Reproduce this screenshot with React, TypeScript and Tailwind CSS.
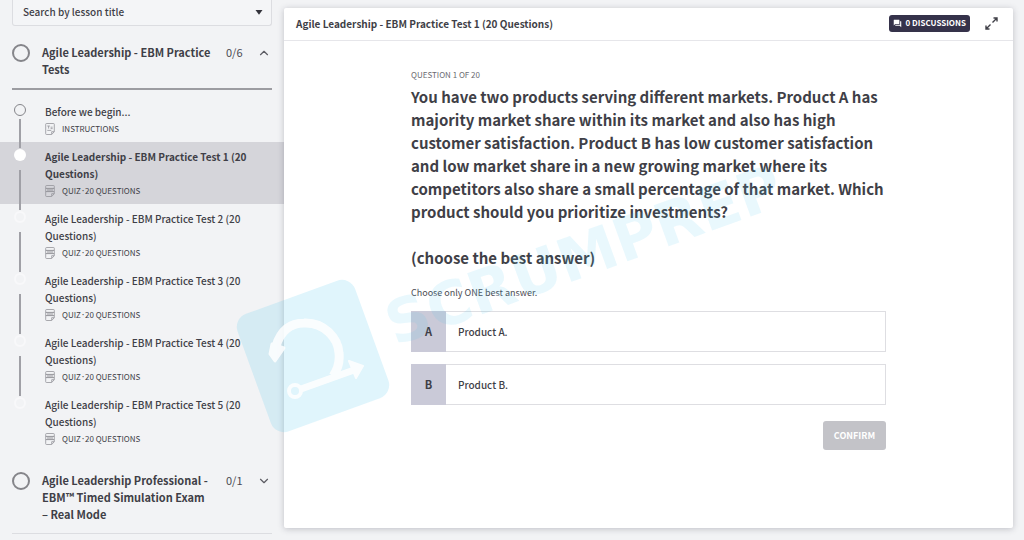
import type { ReactNode } from 'react';
import { ChevronDown, ChevronUp } from 'lucide-react';
import { MdForum } from 'react-icons/md';

type Lesson = {
  title: string;
  type: string;
  detail?: string;
  active?: boolean;
};

const lessons: Lesson[] = [
  { title: 'Before we begin...', type: 'INSTRUCTIONS' },
  { title: 'Agile Leadership - EBM Practice Test 1 (20 Questions)', type: 'QUIZ', detail: '20 QUESTIONS', active: true },
  { title: 'Agile Leadership - EBM Practice Test 2 (20 Questions)', type: 'QUIZ', detail: '20 QUESTIONS' },
  { title: 'Agile Leadership - EBM Practice Test 3 (20 Questions)', type: 'QUIZ', detail: '20 QUESTIONS' },
  { title: 'Agile Leadership - EBM Practice Test 4 (20 Questions)', type: 'QUIZ', detail: '20 QUESTIONS' },
  { title: 'Agile Leadership - EBM Practice Test 5 (20 Questions)', type: 'QUIZ', detail: '20 QUESTIONS' },
];

const options = [
  { key: 'A', label: 'Product A.' },
  { key: 'B', label: 'Product B.' },
];

function LessonIcon({ quiz }: { quiz: boolean }) {
  return (
    <svg width="10" height="12" viewBox="0 0 10 12" fill="none" stroke="#94949a" strokeWidth="0.8" className="mr-[7px] shrink-0" aria-hidden="true">
      <path d="M1.5 0.5h7a0.8 0.8 0 0 1 .8 .8v7.4l-2.6 2.8H1.5a.8 .8 0 0 1-.8-.8V1.3a.8 .8 0 0 1 .8-.8z" />
      <path d="M6.7 11.2V8.7h2.5" />
      {quiz ? (
        <path d="M0.8 3.4h8.4M0.8 6.6h8.4M2 5h6" strokeWidth="1" />
      ) : (
        <path d="M2.3 3h2.6M3.6 3v2.6M5.6 4.2h2M5.6 5.6h2M2.3 7.4h4" />
      )}
    </svg>
  );
}

function SectionHeader({ title, count, open }: { title: ReactNode; count: string; open: boolean }) {
  const Chevron = open ? ChevronUp : ChevronDown;
  return (
    <button type="button" aria-expanded={open} className="flex w-full items-start text-left">
      <span className="h-[18px] w-[18px] shrink-0 rounded-full border-2 border-[#85858a]" />
      <span className="ml-3 flex-1 text-[11px] leading-[17px] font-bold text-[#3f3f47]">{title}</span>
      <span className="ml-1 w-[31px] text-[11px] leading-[17px] text-[#4b4b53]">{count}</span>
      <Chevron className="mt-[2px] mr-px shrink-0 text-[#5c5c63]" size={14} strokeWidth={2} />
    </button>
  );
}

function LessonRow({ lesson, first, last }: { lesson: Lesson; first: boolean; last: boolean }) {
  return (
    <li className={lesson.active ? 'bg-[#d5d5da]' : ''}>
      <a href="#lesson" className="flex pr-7 pl-[14px]">
        <span className="-mb-[6px] flex w-3 shrink-0 flex-col items-center pt-[7px]">
          <span
            className={
              first
                ? 'h-3 w-3 shrink-0 rounded-full border-[1.5px] border-[#85858a]'
                : lesson.active
                  ? 'h-3 w-3 shrink-0 rounded-full bg-white'
                  : 'h-3 w-3 shrink-0 rounded-full border-2 border-[#f8f8fa]'
            }
          />
          {!last && <span className={first ? 'mt-[3px] w-[2px] flex-1 bg-[#a0a0a6]' : 'mt-[9px] w-[2px] flex-1 bg-[#a0a0a6]'} />}
        </span>
        <span className="ml-[19px] flex-1 pt-[6px] pb-[5px]">
          <span
            className={
              lesson.active
                ? 'block text-[10px] leading-[17px] font-bold text-[#3f3f47]'
                : 'block text-[10px] leading-[17px] font-medium text-[#3f3f47]'
            }
          >
            {lesson.title}
          </span>
          <span className="flex h-[17px] items-center text-[8px] leading-[17px] text-[#3f3f47]">
            <LessonIcon quiz={lesson.type === 'QUIZ'} />
            {lesson.type}
            {lesson.detail && (
              <>
                <span className="px-px font-['Lato']">·</span>
                {lesson.detail}
              </>
            )}
          </span>
        </span>
      </a>
    </li>
  );
}

function Sidebar() {
  return (
    <nav className="w-[284px] shrink-0" aria-label="Lessons">
      <div className="mx-3 flex h-[26px] items-center rounded-b-[3px] border border-t-0 border-[#dcdde1] bg-[#f4f5f7]">
        <select aria-label="Search by lesson title" className="h-full min-w-0 flex-1 appearance-none bg-transparent pb-[2px] pl-[10px] text-[10px] font-medium text-[#3f3f47]">
          <option>Search by lesson title</option>
        </select>
        <svg width="8" height="5" viewBox="0 0 8 5" className="mr-2" aria-hidden="true">
          <path d="M0.5 0h7L4 4.8z" fill="#33333b" />
        </svg>
      </div>

      <div className="mx-3 border-b-2 border-[#9c9ca1] pt-[18px] pb-[10px]">
        <SectionHeader title="Agile Leadership - EBM Practice Tests" count="0/6" open />
      </div>

      <ul className="pt-[7px]">
        {lessons.map((lesson, i) => (
          <LessonRow key={lesson.title} lesson={lesson} first={i === 0} last={i === lessons.length - 1} />
        ))}
      </ul>

      <div className="mx-3 mt-5 border-b border-[#dcdde1] pb-[10px]">
        <SectionHeader
          title={
            <>
              Agile Leadership Professional - EBM™ Timed Simulation Exam{' '}
              <span className="whitespace-nowrap">– Real Mode</span>
            </>
          }
          count="0/1"
          open={false}
        />
      </div>
    </nav>
  );
}

function Question() {
  return (
    <form className="mx-auto w-full max-w-[475px] pt-7" onSubmit={(e) => e.preventDefault()}>
      <p className="text-[8px] leading-3 text-[#6b6b72]">QUESTION 1 OF 20</p>
      <h2 className="mt-1 text-[15px] leading-[23px] font-bold text-[#3f3f47]">
        You have two products serving different markets. Product A has majority market share within its market and also
        has high customer satisfaction. Product B has low customer satisfaction and low market share in a new growing
        market where its competitors also share a small percentage of that market. Which product should you prioritize
        investments?
        <br />
        <br />
        (choose the best answer)
      </h2>
      <p className="mt-4 text-[9px] leading-4 text-[#4b4b53]">Choose only ONE best answer.</p>

      <div className="mt-[10px] flex flex-col gap-3">
        {options.map((option) => (
          <label key={option.key} className="flex h-[41px] cursor-pointer border border-[#dedee2] bg-white">
            <input type="radio" name="answer" value={option.key} className="sr-only" />
            <span className="-my-px -ml-px flex w-[35px] items-center justify-center bg-[#cacad8] pb-px text-[11px] font-bold text-[#3f3f47]">
              {option.key}
            </span>
            <span className="flex items-center pb-px pl-3 text-[10px] font-medium text-[#3f3f47]">{option.label}</span>
          </label>
        ))}
      </div>

      <div className="mt-4 flex justify-end">
        <button type="submit" className="h-[29px] w-[63px] rounded-[3px] bg-[#c3c3c8] text-[9px] font-bold text-white">
          CONFIRM
        </button>
      </div>
    </form>
  );
}

function Watermark() {
  return (
    <svg
      className="pointer-events-none absolute top-[120px] left-[220px] h-[330px] w-[600px]"
      viewBox="220 120 600 330"
      fill="none"
      aria-hidden="true"
    >
      <rect x="250.5" y="293.5" width="125" height="125" rx="14" transform="rotate(-20 313 356)" fill="#48c6ee" fillOpacity="0.17" />
      <g stroke="#ffffff" opacity="0.85" strokeLinejoin="round">
        <path d="M276 346 C281 330 291 323 304 323 C324 322 338 338 339 353 C340 362 338 369 333 376" strokeWidth="9" />
        <path d="M301 389 L354 370" strokeWidth="7" />
        <circle cx="295" cy="391" r="6" strokeWidth="4" />
        <path d="M349 361 L363 366 L356 378 Z" fill="#ffffff" strokeWidth="2" />
        <path d="M272 344 L270 354 L275 361 L284 348 Z" fill="#ffffff" strokeWidth="3" />
      </g>
      <text
        x="395"
        y="346"
        transform="rotate(-20 395 346)"
        fill="#48c6ee"
        fillOpacity="0.12"
        className="font-['DejaVu_Sans'] text-[60px] font-bold"
      >
        SCRUMPREP
      </text>
    </svg>
  );
}

export default function App() {
  return (
    <div className="relative flex min-h-screen bg-[#f2f3f5] font-['Noto_Sans_CJK_SC',sans-serif]">
      <Sidebar />
      <main className="flex flex-1 pt-2 pr-[11px] pb-3">
        <section className="flex-1 rounded-[2px] bg-white shadow-[0_1px_6px_rgba(40,40,60,0.25)]">
          <header className="flex h-[33px] items-center border-b border-[#e6e6ea] pr-[15px] pb-[2px] pl-3">
            <h1 className="flex-1 text-[10px] font-bold text-[#3f3f47]">Agile Leadership - EBM Practice Test 1 (20 Questions)</h1>
            <button type="button" className="flex h-[17px] items-center gap-1 rounded-[3px] bg-[#35324a] px-1 text-[8px] font-bold text-white">
              <MdForum size={9} />
              0 DISCUSSIONS
            </button>
            <button type="button" aria-label="Full screen" className="ml-[15px]">
              <svg width="13" height="13" viewBox="0 0 13 13" fill="none" stroke="#3f3f47" strokeWidth="1.4">
                <path d="M8.500 1H12v3.500M12 1L7.500 5.500M4.500 12H1V8.500M1 12l4.500-4.500" />
              </svg>
            </button>
          </header>
          <Question />
        </section>
      </main>
      <Watermark />
    </div>
  );
}
